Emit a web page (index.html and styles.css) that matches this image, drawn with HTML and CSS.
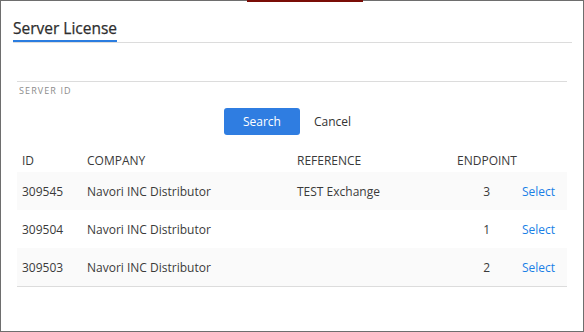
FILE: index.html
```html
<!DOCTYPE html>
<html lang="en">
<head>
    <meta charset="UTF-8">
    <meta name="viewport" content="width=device-width, initial-scale=1.0">
    <title>Server License</title>
    <link rel="stylesheet" href="styles.css">
</head>
<body>
    <div class="dialog">
        <div class="top-mark"></div>
        <div class="dialog-head">
            <h2 class="dialog-title">Server License</h2>
        </div>

        <div class="dialog-body">
            <div class="field">
                <input type="text" id="server-id" class="field-input">
                <label for="server-id" class="field-label">SERVER ID</label>
            </div>

            <div class="actions">
                <button type="button" class="btn-primary">Search</button>
                <button type="button" class="btn-link">Cancel</button>
            </div>

            <div class="license-table">
                <div class="row row-head">
                    <div class="cell">ID</div>
                    <div class="cell">COMPANY</div>
                    <div class="cell">REFERENCE</div>
                    <div class="cell span-2">ENDPOINT</div>
                </div>
                <div class="row">
                    <div class="cell">309545</div>
                    <div class="cell">Navori INC Distributor</div>
                    <div class="cell">TEST Exchange</div>
                    <div class="cell num">3</div>
                    <div class="cell"><a href="#" class="select-link">Select</a></div>
                </div>
                <div class="row">
                    <div class="cell">309504</div>
                    <div class="cell">Navori INC Distributor</div>
                    <div class="cell"></div>
                    <div class="cell num">1</div>
                    <div class="cell"><a href="#" class="select-link">Select</a></div>
                </div>
                <div class="row">
                    <div class="cell">309503</div>
                    <div class="cell">Navori INC Distributor</div>
                    <div class="cell"></div>
                    <div class="cell num">2</div>
                    <div class="cell"><a href="#" class="select-link">Select</a></div>
                </div>
            </div>
        </div>
    </div>
</body>
</html>
```

FILE: styles.css
```css
body {
    margin: 0;
    font-family: 'Open Sans', 'Noto Sans', Arial, sans-serif;
    color: #333;
    background: #fff;
}

.dialog {
    position: relative;
    width: 584px;
    height: 332px;
    box-sizing: border-box;
    border: 1px solid #6e6e6e;
    background: #fff;
}

.top-mark {
    position: absolute;
    top: -1px;
    left: 246px;
    width: 116px;
    height: 2px;
    background: #7a0d06;
}

.dialog-head {
    margin: 0 11px 0 12px;
    padding-top: 16px;
    border-bottom: 1px solid #dcdcdc;
}

.dialog-title {
    display: inline-block;
    margin: 0;
    padding: 0 0 1px;
    font-size: 15.5px;
    font-weight: normal;
    line-height: 21px;
    color: #2e2e2e;
    -webkit-text-stroke: 0.25px #2e2e2e;
    border-bottom: 2px solid #2b7de0;
}

.dialog-body {
    padding: 0 16px;
}

.field {
    padding-top: 8px;
}

.field-input {
    display: block;
    width: 100%;
    box-sizing: border-box;
    height: 31px;
    border: none;
    border-bottom: 1px solid #dcdcdc;
    outline: none;
    font: inherit;
}

.field-label {
    display: block;
    margin: 3px 0 0 2px;
    font-size: 9px;
    letter-spacing: 1.1px;
    color: #8c8c8c;
    line-height: 12px;
}

.actions {
    display: flex;
    justify-content: center;
    margin-top: 11px;
    padding-left: 5px;
}

.btn-primary {
    width: 76px;
    height: 27px;
    background: #2f7de1;
    color: #fff;
    border: none;
    border-radius: 3px;
    font-family: inherit;
    font-size: 12px;
    cursor: pointer;
}

.btn-link {
    height: 27px;
    padding: 0 14px;
    background: none;
    border: none;
    color: #333;
    font-family: inherit;
    font-size: 12px;
    cursor: pointer;
}

.license-table {
    margin-top: 13px;
    border-bottom: 1px solid #dcdcdc;
}

.row {
    display: grid;
    grid-template-columns: 65px 210px 160px 43px 72px;
    height: 38px;
    align-items: center;
    font-size: 12px;
    color: #3a3a3a;
}

.row:nth-child(even) {
    background: #fafafa;
}

.row-head {
    height: 24px;
}

.cell {
    padding-left: 5px;
    white-space: nowrap;
}

.span-2 {
    grid-column: span 2;
}

.num {
    text-align: right;
    padding: 0 5px 0 0;
}

.select-link {
    display: block;
    padding-left: 22px;
    color: #1a7fe6;
    text-decoration: none;
}
```
